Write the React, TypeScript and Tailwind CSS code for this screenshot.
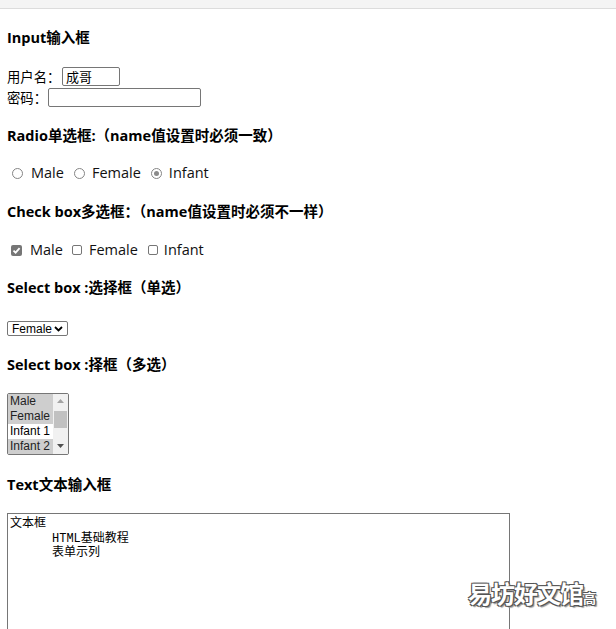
import React from "react";

const heading = "font-bold text-[14.5px] leading-[20px] text-black [font-family:'Open_Sans','Noto_Sans_CJK_SC',sans-serif]";

function Radio({ checked }: { checked?: boolean }) {
  return (
    <span className="flex shrink-0 w-[11px] h-[11px] rounded-full border border-[#858585] bg-white items-center justify-center">
      {checked && <span className="w-[5px] h-[5px] rounded-full bg-[#8a8a8a]" />}
    </span>
  );
}

function Check({ checked }: { checked?: boolean }) {
  return checked ? (
    <span className="flex shrink-0 w-[11px] h-[11px] rounded-[2px] bg-[#767676] items-center justify-center">
      <svg width="9" height="9" viewBox="0 0 9 9">
        <path d="M1.5 4.6 L3.6 6.6 L7.6 2.2" stroke="white" strokeWidth="1.8" fill="none" />
      </svg>
    </span>
  ) : (
    <span className="block shrink-0 w-[10px] h-[10px] rounded-[2px] border border-[#767676] bg-white" />
  );
}

export default function App() {
  const label = "text-[14.5px] leading-[22px] text-[#111] [font-family:'Open_Sans',sans-serif]";
  return (
    <div className="relative min-h-[629px] bg-white overflow-hidden">
      <div className="h-[9px] bg-[#f4f4f4] border-b border-[#dcdcdc]" />
      <div className="pl-[7px] text-black [font-family:'Open_Sans','Noto_Sans_CJK_SC',sans-serif]">
        <div className={`${heading} mt-[19px]`}>Input输入框</div>

        <div className="mt-[18px] h-[21px] flex items-center text-[13.33px] [font-family:'Noto_Sans_CJK_SC',sans-serif]">
          <span className="w-[55px]">用户名：</span>
          <div className="h-[19px] w-[58px] border border-[#767676] rounded-[2px] flex items-center pl-[3px] text-[13px]">
            成哥
          </div>
        </div>
        <div className="h-[21px] flex items-center text-[13.33px] [font-family:'Noto_Sans_CJK_SC',sans-serif]">
          <span className="w-[41px]">密码：</span>
          <div className="h-[19px] w-[153px] border border-[#767676] rounded-[2px]" />
        </div>

        <div className={`${heading} mt-[18px]`}>Radio单选框:（name值设置时必须一致）</div>
        <div className={`mt-[16px] flex items-center ${label}`}>
          <span className="ml-[5px] flex"><Radio /></span>
          <span className="ml-[8px]">Male</span>
          <span className="ml-[10px] flex"><Radio /></span>
          <span className="ml-[7px]">Female</span>
          <span className="ml-[10px] flex"><Radio checked /></span>
          <span className="ml-[7px]">Infant</span>
        </div>

        <div className={`${heading} mt-[18px]`}>Check box多选框：（name值设置时必须不一样）</div>
        <div className={`mt-[17px] flex items-center ${label}`}>
          <span className="ml-[4px] flex"><Check checked /></span>
          <span className="ml-[8px]">Male</span>
          <span className="ml-[9px] flex"><Check /></span>
          <span className="ml-[7px]">Female</span>
          <span className="ml-[10px] flex"><Check /></span>
          <span className="ml-[6px]">Infant</span>
        </div>

        <div className={`${heading} mt-[17px]`}>Select box :选择框（单选）</div>
        <div className="mt-[23px] w-[61px] h-[15px] border border-[#767676] rounded-[2px] flex items-center justify-between pl-[4px] pr-[4px] text-[12px] [font-family:'Liberation_Sans',sans-serif]">
          <span className="leading-none">Female</span>
          <svg width="9" height="6" viewBox="0 0 9 6">
            <path d="M1 1 L4.5 4.5 L8 1" stroke="black" strokeWidth="1.8" fill="none" />
          </svg>
        </div>

        <div className={`${heading} mt-[19px]`}>Select box :择框（多选）</div>
        <div className="mt-[18px] w-[62px] h-[62px] border border-[#767676] rounded-[2px] flex overflow-hidden text-[12px] leading-[15px] text-[#222] [font-family:'Liberation_Sans',sans-serif]">
          <div className="flex-1 flex flex-col">
            <div className="h-[15px] bg-[#cecece] pl-[2px]">Male</div>
            <div className="h-[15px] bg-[#cecece] pl-[2px]">Female</div>
            <div className="h-[15px] bg-white pl-[2px] text-black">Infant 1</div>
            <div className="h-[15px] bg-[#cecece] pl-[2px]">Infant 2</div>
          </div>
          <div className="w-[15px] bg-[#f1f1f1] flex flex-col items-center">
            <svg className="mt-[5px]" width="7" height="4" viewBox="0 0 7 4">
              <path d="M0 4 L3.5 0 L7 4 Z" fill="#a3a3a3" />
            </svg>
            <div className="mt-[8px] w-[13px] h-[17px] bg-[#c1c1c1]" />
            <div className="flex-1" />
            <svg className="mb-[6px]" width="7" height="4" viewBox="0 0 7 4">
              <path d="M0 0 L3.5 4 L7 0 Z" fill="#505050" />
            </svg>
          </div>
        </div>

        <div className={`${heading} mt-[20px]`}>Text文本输入框</div>
        <textarea
          readOnly
          defaultValue={"文本框\n\tHTML基础教程\n\t表单示列"}
          className="mt-[18px] block w-[503px] h-[200px] border border-[#767676] px-[2px] pt-[3px] resize-none outline-none text-[12px] leading-[14.5px] text-black [tab-size:42px] [font-family:'Liberation_Mono','Noto_Sans_CJK_SC',monospace]"
        />
      </div>

      <div className="absolute left-[468px] top-[578px] text-[24px] leading-[30px] text-white font-bold tracking-[-1px] [font-family:'Noto_Sans_CJK_SC',sans-serif] [text-shadow:-1px_-1px_0_#555,1px_-1px_0_#555,-1px_1px_0_#555,1px_1px_0_#555,2px_2px_1px_#999]">
        易坊好文馆<span className="text-[13px]">高</span>
      </div>
    </div>
  );
}
